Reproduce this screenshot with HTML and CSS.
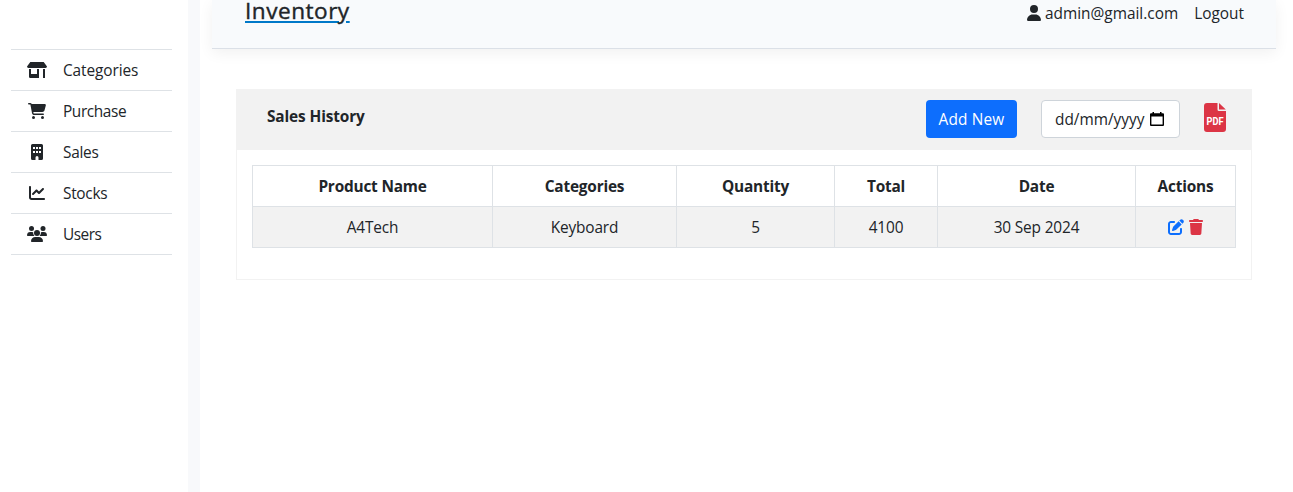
FILE: index.html
```html
<!DOCTYPE html>
<html lang="en">
<head>
<meta charset="utf-8">
<title>Inventory</title>
<link rel="stylesheet" href="styles.css">
</head>
<body>
<aside class="sidebar">
  <ul class="menu">
    <li><svg class="wide" viewBox="0 0 20 16"><path d="M3.300 0h13.400L20 4.600Q20 6 18.500 6H1.500Q0 6 0 4.600ZM2 7h2v5h6V7h2v9H3.300Q2 16 2 14.700ZM16 7h2v9h-2z"/></svg><span class="t-categories">Categories</span></li>
    <li><svg class="cart" viewBox="0 0 576 512"><path d="M0 24C0 10.700 10.700 0 24 0H69.500c22 0 41.500 12.800 50.600 32h411c26.300 0 45.500 25 38.600 50.400l-41 152.300c-8.500 31.400-37 53.300-69.500 53.300H170.700l5.400 28.500c2.200 11.300 12.100 19.500 23.600 19.500H488c13.300 0 24 10.700 24 24s-10.700 24-24 24H199.700c-34.600 0-64.300-24.600-70.700-58.500L77.400 54.500c-.7-3.800-4-6.500-7.900-6.500H24C10.700 48 0 37.300 0 24zM128 464a48 48 0 1 1 96 0 48 48 0 1 1-96 0zm336-48a48 48 0 1 1 0 96 48 48 0 1 1 0-96z"/></svg><span class="t-purchase">Purchase</span></li>
    <li><svg class="building" viewBox="0 0 12 16"><path fill-rule="evenodd" d="M1.500 0h9Q12 0 12 1.500v13Q12 16 10.500 16H7.500v-2.500a1.500 1.500 0 0 0-3 0V16h-3Q0 16 0 14.500v-13Q0 0 1.500 0ZM2 3v2h2V3ZM5 3v2h2V3ZM8 3v2h2V3ZM2 7v2h2V7ZM5 7v2h2V7ZM8 7v2h2V7Z"/></svg><span class="t-sales">Sales</span></li>
    <li><svg class="square" viewBox="0 0 512 512"><path d="M64 64c0-17.700-14.300-32-32-32S0 46.300 0 64V400c0 44.200 35.800 80 80 80H480c17.700 0 32-14.300 32-32s-14.300-32-32-32H80c-8.800 0-16-7.200-16-16V64zm406.600 86.600c12.500-12.500 12.500-32.800 0-45.300s-32.800-12.500-45.300 0L320 210.700l-57.400-57.400c-12.500-12.500-32.800-12.500-45.300 0l-112 112c-12.500 12.500-12.500 32.800 0 45.300s32.800 12.500 45.300 0L240 221.300l57.400 57.400c12.500 12.500 32.800 12.500 45.300 0l128-128z"/></svg><span class="t-stocks">Stocks</span></li>
    <li><svg class="wide" viewBox="0 0 20 16"><circle cx="4.500" cy="2.500" r="2.500"/><circle cx="16" cy="2.500" r="2.500"/><circle cx="10" cy="7" r="3"/><path d="M0 9.300A3.400 3.400 0 0 1 3.300 6h1.500q.8 0 1.400.3A4 4 0 0 0 7.400 10H.7Q0 10 0 9.300ZM20 9.300A3.400 3.400 0 0 0 16.700 6h-1.500q-.8 0-1.300.3A4 4 0 0 1 12.600 10h6.700q.7 0 .7-.7ZM4 15.200A4.200 4.200 0 0 1 8.200 11h3.600a4.200 4.200 0 0 1 4.200 4.200q0 .8-.8.8H4.800Q4 16 4 15.200Z"/></svg><span class="t-users">Users</span></li>
  </ul>
</aside>
<div class="divider"></div>
<main class="main">
  <header class="topbar">
    <a class="brand">Inventory</a>
    <nav class="account">
      <svg class="person" viewBox="0 0 448 512"><path d="M224 256A128 128 0 1 0 224 0a128 128 0 1 0 0 256zm-45.700 48C79.800 304 0 383.800 0 482.300C0 498.700 13.300 512 29.700 512H418.300c16.400 0 29.700-13.300 29.700-29.700C448 383.800 368.200 304 269.700 304H178.300z"/></svg>
      <span class="email">admin@gmail.com</span>
      <span class="logout">Logout</span>
    </nav>
  </header>
  <section class="card">
    <div class="card-head">
      <h1 class="title">Sales History</h1>
      <button class="add"><span>Add New</span></button>
      <div class="date"><span>dd/mm/yyyy</span><svg viewBox="0 0 14 14"><path fill-rule="evenodd" d="M2.500 0H4v1.300h6V0h1.500v1.300H13q1 0 1 1V13q0 1-1 1H1q-1 0-1-1V2.300q0-1 1-1h1.500ZM1.400 4.400v8.200h11.200V4.400Z"/></svg></div>
      <svg class="pdf" viewBox="0 0 22 29"><path d="M3 0h10.500v6.500Q13.500 8 15 8H22v18q0 3-3 3H3q-3 0-3-3V3q0-3 3-3Z"/><path d="M15 0v6.500h6.800Z"/><text x="2.500" y="21.500" textLength="17" lengthAdjust="spacingAndGlyphs">PDF</text></svg>
    </div>
    <div class="card-body">
      <table>
        <colgroup><col class="c1"><col class="c2"><col class="c3"><col class="c4"><col class="c5"><col class="c6"></colgroup>
        <thead><tr><th>Product Name</th><th>Categories</th><th>Quantity</th><th>Total</th><th>Date</th><th>Actions</th></tr></thead>
        <tbody><tr><td>A4Tech</td><td>Keyboard</td><td>5</td><td>4100</td><td>30 Sep 2024</td><td class="icons"><div class="actions">
          <svg class="edit" viewBox="0 0 512 512"><path d="M471.600 21.700c-21.900-21.900-57.300-21.900-79.200 0L362.300 51.700l97.900 97.900 30.100-30.100c21.900-21.900 21.900-57.300 0-79.200L471.600 21.700zm-299.200 220c-6.100 6.100-10.800 13.600-13.500 21.900l-29.600 88.800c-2.900 8.600-.6 18.100 5.800 24.600s15.900 8.700 24.600 5.800l88.800-29.600c8.200-2.700 15.700-7.400 21.900-13.500L437.700 172.300 339.700 74.300 172.400 241.700zM96 64C43 64 0 107 0 160V416c0 53 43 96 96 96H352c53 0 96-43 96-96V320c0-17.700-14.300-32-32-32s-32 14.300-32 32v96c0 17.700-14.300 32-32 32H96c-17.700 0-32-14.300-32-32V160c0-17.700 14.300-32 32-32h96c17.700 0 32-14.300 32-32s-14.300-32-32-32H96z"/></svg>
          <svg class="trash" viewBox="0 0 448 512"><path d="M135.200 17.700L128 32H32C14.300 32 0 46.300 0 64S14.300 96 32 96H416c17.700 0 32-14.300 32-32s-14.300-32-32-32H320l-7.200-14.300C307.400 6.800 296.300 0 284.200 0H163.800c-12.100 0-23.200 6.800-28.600 17.700zM416 128H32L53.200 467c1.600 25.300 22.600 45 47.900 45H346.900c25.300 0 46.300-19.700 47.900-45L416 128z"/></svg>
        </div></td></tr></tbody>
      </table>
    </div>
  </section>
</main>
</body>
</html>
```
FILE: styles.css
```css
* { box-sizing: border-box; }
body {
  margin: 0;
  height: 492px;
  display: flex;
  overflow: hidden;
  background: #fff;
  color: #212529;
  font: 15.4px/24px "Segoe UI", "Open Sans", "Noto Sans", sans-serif;
  letter-spacing: -0.28px;
}
svg { display: block; flex: none; fill: currentColor; }
.sidebar { width: 188px; padding: 49px 16px 0 11px; }
.menu { margin: 0; padding: 0; list-style: none; border-top: 1px solid #dee2e6; }
.menu li { display: flex; align-items: center; height: 41px; padding-left: 16px; border-bottom: 1px solid #dee2e6; }
.menu span { padding-top: 2px; white-space: nowrap; }
.t-categories { letter-spacing: -0.08px; }
.t-purchase { letter-spacing: -0.4px; }
.t-users { letter-spacing: -0.5px; }
.wide { width: 20px; height: 16px; margin-right: 16px; }
.cart { width: 18px; height: 16px; margin: 0 17px 0 1px; }
.building { width: 12px; height: 16px; margin: 0 20px 0 4px; }
.square { width: 16px; height: 16px; margin: 0 18px 0 2px; }
.divider { width: 12px; background: #f8f9fb; }
.main { flex: 1; padding: 0 17px 0 12px; }
.topbar {
  height: 49px;
  display: flex;
  justify-content: space-between;
  padding: 0 32px 0 33px;
  background: #f8fafc;
  border-bottom: 1px solid #dbe0e7;
  box-shadow: 0 4px 14px rgba(0, 0, 0, .06);
}
.brand {
  height: 32px;
  font-size: 22.6px;
  font-weight: 500;
  line-height: 22px;
  letter-spacing: 0.5px;
  -webkit-text-stroke: 0.4px #212529;
  text-decoration: underline #0078c8 2px;
  text-underline-offset: 2px;
}
.account { display: flex; align-items: center; height: 28px; }
.person { width: 14px; height: 16px; margin: -2px 4px 0 0; }
.email { margin-right: 16px; letter-spacing: 0; }
.logout { letter-spacing: 0; }
.card { width: 1016px; height: 191px; margin: 40px 0 0 24px; border: 1px solid #f2f2f2; }
.card-head { display: flex; align-items: center; height: 60px; padding: 0 25px 2px 30px; background: #f2f2f2; }
.title { flex: 1; margin: -5px 0 0; font-size: 15.4px; line-height: 24px; font-weight: 700; letter-spacing: -0.12px; }
.add { width: 91px; height: 38px; padding: 2px 0 0; border: 0; border-radius: 4px; background: #0d6efd; color: #fff; font: inherit; letter-spacing: 0.15px; }
.date { display: flex; align-items: center; width: 139px; height: 38px; margin: 0 24px; padding-left: 13px; border: 1px solid #ced4da; border-radius: 4px; background: #fff; }
.date span { width: 90px; padding-top: 2px; letter-spacing: 0; }
.date svg { width: 14px; height: 14px; margin: -1px 0 0 5px; fill: #000; }
.pdf { width: 22px; height: 29px; margin-top: -4px; fill: #dc3545; }
.pdf text { fill: #fff; font: 700 11px "Roboto", sans-serif; letter-spacing: 0; }
.card-body { padding: 15px; }
table { width: 984px; table-layout: fixed; border-collapse: collapse; text-align: center; }
.c1 { width: 240px; }
.c2 { width: 184px; }
.c3 { width: 158px; }
.c4 { width: 103px; }
.c5 { width: 198px; }
.c6 { width: 100px; }
th, td { height: 41px; padding: 2px 0 0; border: 1px solid #dee2e6; }
th { letter-spacing: -0.2px; }
td { background: #f2f2f2; letter-spacing: -0.15px; }
.icons { padding: 0; }
.actions { display: flex; justify-content: center; gap: 5px; }
.edit { width: 16px; height: 16px; color: #0d6efd; }
.trash { width: 14px; height: 16px; color: #dc3545; }
```
